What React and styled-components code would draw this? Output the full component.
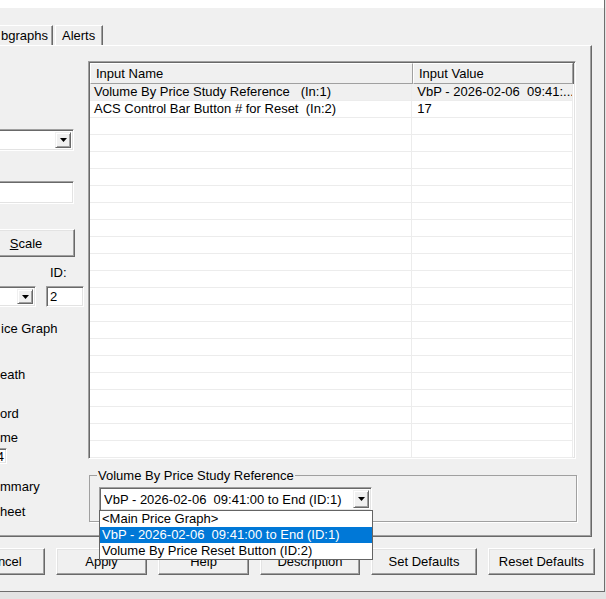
import React from 'react';
import styled, { createGlobalStyle } from 'styled-components';

const GlobalStyle = createGlobalStyle`
  html, body {
    margin: 0;
    padding: 0;
    background: #f0f0f0;
  }
  body {
    font-family: "Liberation Sans", Arial, sans-serif;
    font-size: 13px;
    color: #000;
  }
`;

const Screen = styled.div`
  width: 606px;
  height: 599px;
  overflow: hidden;
  position: relative;
  background: #e3e3e3;
`;

const Dialog = styled.div`
  width: 605px;
  height: 592px;
  box-sizing: border-box;
  border-right: 1px solid #6e6e6e;
  border-bottom: 1px solid #6e6e6e;
  background: #f0f0f0;
  display: flex;
  flex-direction: column;
`;

const TopStrip = styled.div`
  height: 8px;
  background: #fff;
`;

const TabBar = styled.div`
  height: 37px;
  box-sizing: border-box;
  padding-top: 17px;
  display: flex;
  align-items: flex-end;
`;

const Tab = styled.div`
  height: 20px;
  width: ${p => p.$w}px;
  margin-left: ${p => p.$ml}px;
  box-sizing: border-box;
  border-top: 1px solid #fff;
  border-left: 1px solid #fff;
  border-right: 1px solid #696969;
  box-shadow: inset -1px 0 #a0a0a0;
  padding-left: 6px;
  display: flex;
  align-items: center;
  white-space: nowrap;
`;

const TabPanel = styled.div`
  width: 592px;
  height: 492px;
  box-sizing: border-box;
  border-top: 1px solid #fff;
  border-right: 1px solid #696969;
  border-bottom: 1px solid #696969;
  box-shadow: inset -1px -1px #a0a0a0;
  display: flex;
`;

const LeftCol = styled.div`
  width: 88px;
  flex: none;
  display: flex;
  flex-direction: column;
`;

const RightCol = styled.div`
  width: 489px;
  flex: none;
  padding-top: 15px;
  display: flex;
  flex-direction: column;
`;

const Sunken = styled.div`
  box-sizing: border-box;
  background: #fff;
  border-top: 1px solid #a0a0a0;
  border-left: 1px solid #a0a0a0;
  border-right: 1px solid #fff;
  border-bottom: 1px solid #fff;
  box-shadow: inset 1px 1px #696969, inset -1px -1px #e3e3e3;
`;

const Combo = styled(Sunken)`
  position: relative;
  width: ${p => p.$w}px;
  height: ${p => p.$h}px;
  margin-left: ${p => p.$ml || 0}px;
  margin-top: ${p => p.$mt || 0}px;
  display: flex;
  align-items: center;
  padding-left: 4px;
  white-space: nowrap;
`;

const ComboText = styled.span`
  flex: 1;
  overflow: hidden;
  white-space: pre;
`;

const ArrowBtn = styled.div`
  width: 16px;
  align-self: stretch;
  margin: 2px 2px 2px 0;
  box-sizing: border-box;
  background: #f0f0f0;
  border-top: 1px solid #f0f0f0;
  border-left: 1px solid #f0f0f0;
  border-right: 1px solid #696969;
  border-bottom: 1px solid #696969;
  box-shadow: inset 1px 1px #fff, inset -1px -1px #a0a0a0;
  display: flex;
  align-items: center;
  justify-content: center;
`;

const Edit = styled(Sunken)`
  width: ${p => p.$w}px;
  height: ${p => p.$h}px;
  margin-left: ${p => p.$ml || 0}px;
  margin-top: ${p => p.$mt || 0}px;
  padding-left: ${p => p.$pl || 3}px;
  display: flex;
  align-items: center;
  justify-content: ${p => (p.$right ? 'flex-end' : 'flex-start')};
  padding-right: ${p => (p.$right ? 2 : 0)}px;
`;

const Button = styled.div`
  width: ${p => p.$w}px;
  height: ${p => p.$h || 27}px;
  margin-left: ${p => p.$ml || 0}px;
  margin-top: ${p => p.$mt || 0}px;
  flex: none;
  box-sizing: border-box;
  background: #f0f0f0;
  border-top: 1px solid #fff;
  border-left: 1px solid #fff;
  border-right: 1px solid #696969;
  border-bottom: 1px solid #696969;
  box-shadow: inset -1px -1px #a0a0a0, inset 1px 1px #e3e3e3;
  display: flex;
  align-items: center;
  justify-content: center;
  white-space: nowrap;
  u {
    text-decoration: underline;
  }
`;

const Label = styled.div`
  height: 15px;
  line-height: 15px;
  margin-top: ${p => p.$mt || 0}px;
  margin-left: ${p => p.$ml || 0}px;
  white-space: nowrap;
`;

const IdRow = styled.div`
  display: flex;
  margin-top: 6px;
  gap: 10px;
`;

const ListView = styled.div`
  width: 488px;
  height: 398px;
  box-sizing: border-box;
  background: #fff;
  border-top: 1px solid #a0a0a0;
  border-left: 1px solid #a0a0a0;
  border-right: 1px solid #fff;
  border-bottom: 1px solid #fff;
  box-shadow: inset 1px 1px #696969, inset -1px -1px #e3e3e3;
  padding: 1px 2px 2px 1px;
  overflow: hidden;
`;

const Header = styled.div`
  display: flex;
  height: 21px;
`;

const HeadCell = styled.div`
  width: ${p => p.$w}px;
  box-sizing: border-box;
  background: #f0f0f0;
  border-top: 1px solid #fff;
  border-left: 1px solid #fff;
  border-right: 1px solid #a0a0a0;
  border-bottom: 1px solid #a0a0a0;
  box-shadow: ${p => (p.$last ? '1px 0 #696969' : 'none')};
  padding-left: 5px;
  display: flex;
  align-items: center;
`;

const Row = styled.div`
  display: flex;
  height: 17px;
  box-sizing: border-box;
  border-bottom: 1px solid #ececec;
  background: ${p => (p.$sel ? '#f0f0f0' : '#fff')};
`;

const Cell = styled.div`
  width: ${p => p.$w}px;
  box-sizing: border-box;
  border-right: 1px solid #ececec;
  padding-left: ${p => p.$pl}px;
  line-height: 16px;
  white-space: pre;
  overflow: hidden;
`;

const Group = styled.fieldset`
  width: 488px;
  height: 54px;
  margin: 9px 0 0 1px;
  padding: 4px 6px 10px 8px;
  box-sizing: border-box;
  border: 1px solid #a0a0a0;
  box-shadow: 1px 1px #fff;
`;

const Legend = styled.legend`
  padding: 0 1px;
  margin-left: -1px;
  line-height: 15px;
  white-space: nowrap;
`;

const DropList = styled.div`
  position: absolute;
  top: 100%;
  left: -1px;
  width: 274px;
  box-sizing: border-box;
  background: #fff;
  border: 1px solid #646464;
  z-index: 5;
`;

const DropItem = styled.div`
  height: 16px;
  line-height: 16px;
  padding-left: 2px;
  white-space: pre;
  background: ${p => (p.$sel ? '#0078d7' : 'transparent')};
  color: ${p => (p.$sel ? '#fff' : '#000')};
`;

const ButtonRow = styled.div`
  display: flex;
  gap: 11px;
  margin-top: 11px;
`;

const Arrow = () => (
  <svg width="7" height="4" viewBox="0 0 7 4">
    <path d="M0 0h7L3.5 4z" fill="#000" />
  </svg>
);

const inputs = [
  { name: 'Volume By Price Study Reference   (In:1)', value: 'VbP - 2026-02-06  09:41:...', sel: true },
  { name: 'ACS Control Bar Button # for Reset  (In:2)', value: '17' },
];

const emptyRows = Array.from({ length: 21 });

const App = () => {
  return (
    <>
      <GlobalStyle />
      <Screen>
        <Dialog>
          <TopStrip />
          <TabBar>
            <Tab $ml={-6} $w={59}>bgraphs</Tab>
            <Tab $ml={2} $w={48}>Alerts</Tab>
          </TabBar>
          <TabPanel>
            <LeftCol>
              <Combo $w={174} $h={22} $ml={-100} $mt={83}>
                <ComboText />
                <ArrowBtn><Arrow /></ArrowBtn>
              </Combo>
              <Edit $w={174} $h={23} $ml={-100} $mt={30} />
              <Button $w={98} $h={28} $ml={-23} $mt={25}>
                <span><u>S</u>cale</span>
              </Button>
              <Label $mt={8} $ml={50}>ID:</Label>
              <IdRow>
                <Combo $w={136} $h={21} $ml={-100}>
                  <ComboText />
                  <ArrowBtn><Arrow /></ArrowBtn>
                </Combo>
                <Edit $w={38} $h={21}>2</Edit>
              </IdRow>
              <Label $mt={14} $ml={1}>ice Graph</Label>
              <Label $mt={31}>eath</Label>
              <Label $mt={24}>ord</Label>
              <Label $mt={9}>me</Label>
              <Edit $w={27} $h={16} $ml={-20} $mt={3} $right>4</Edit>
              <Label $mt={15}>mmary</Label>
              <Label $mt={10}>heet</Label>
            </LeftCol>
            <RightCol>
              <ListView>
                <Header>
                  <HeadCell $w={323}>Input Name</HeadCell>
                  <HeadCell $w={160} $last>Input Value</HeadCell>
                </Header>
                {inputs.map(r => (
                  <Row key={r.name} $sel={r.sel}>
                    <Cell $w={323} $pl={4}>{r.name}</Cell>
                    <Cell $w={161} $pl={5}>{r.value}</Cell>
                  </Row>
                ))}
                {emptyRows.map((_, i) => (
                  <Row key={i}>
                    <Cell $w={323} $pl={4} />
                    <Cell $w={161} $pl={5} />
                  </Row>
                ))}
              </ListView>
              <Group>
                <Legend>Volume By Price Study Reference</Legend>
                <Combo $w={273} $h={24} $ml={1}>
                  <ComboText>VbP - 2026-02-06  09:41:00 to End (ID:1)</ComboText>
                  <ArrowBtn><Arrow /></ArrowBtn>
                  <DropList>
                    <DropItem>&lt;Main Price Graph&gt;</DropItem>
                    <DropItem $sel>VbP - 2026-02-06  09:41:00 to End (ID:1)</DropItem>
                    <DropItem>Volume By Price Reset Button (ID:2)</DropItem>
                  </DropList>
                </Combo>
              </Group>
            </RightCol>
          </TabPanel>
          <ButtonRow>
            <Button $w={87} $ml={-42}>Cancel</Button>
            <Button $w={91}>Apply</Button>
            <Button $w={91}>Help</Button>
            <Button $w={100}>Description</Button>
            <Button $w={106}>Set Defaults</Button>
            <Button $w={107}>Reset Defaults</Button>
          </ButtonRow>
        </Dialog>
      </Screen>
    </>
  );
};

export default App;
